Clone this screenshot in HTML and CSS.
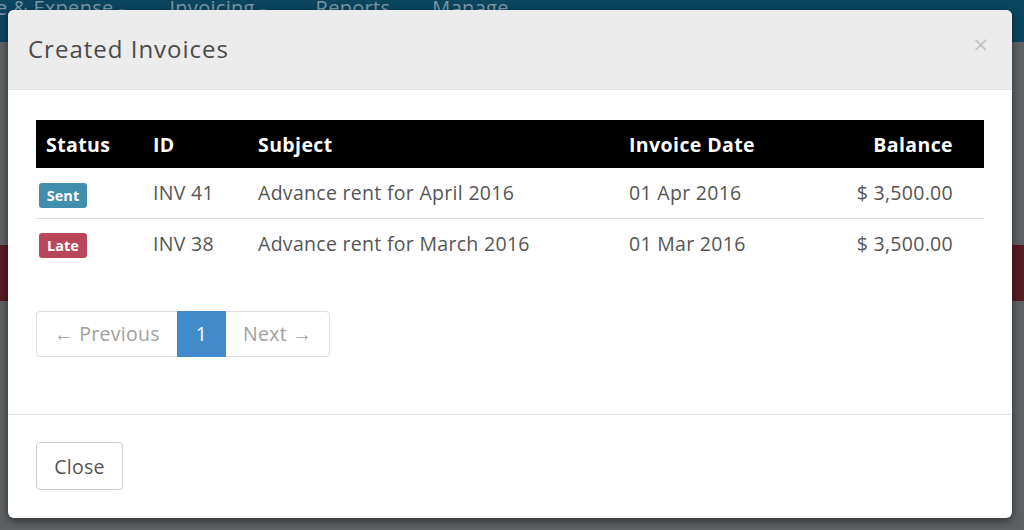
FILE: index.html
```html
<!DOCTYPE html>
<html>
<head>
<meta charset="utf-8">
<link rel="stylesheet" href="styles.css">
</head>
<body>
<div class="page">
  <nav class="topnav">
    <span class="nav-item first">e &amp; Expense <span class="caret">▾</span></span>
    <span class="nav-item second">Invoicing <span class="caret">▾</span></span>
    <span class="nav-item third">Reports</span>
    <span class="nav-item">Manage</span>
  </nav>
  <div class="spacer-a"></div>
  <div class="alert-band"></div>
</div>

<div class="modal">
  <div class="modal-header">
    <h4 class="modal-title">Created Invoices</h4>
    <span class="close">×</span>
  </div>
  <div class="modal-body">
    <table class="invoices">
      <thead>
        <tr>
          <th class="c-status">Status</th>
          <th class="c-id">ID</th>
          <th class="c-subject">Subject</th>
          <th class="c-date">Invoice Date</th>
          <th class="c-balance">Balance</th>
        </tr>
      </thead>
      <tbody>
        <tr>
          <td class="c-status"><span class="label label-sent">Sent</span></td>
          <td class="c-id">INV 41</td>
          <td class="c-subject">Advance rent for April 2016</td>
          <td class="c-date">01 Apr 2016</td>
          <td class="c-balance">$ 3,500.00</td>
        </tr>
        <tr class="sep">
          <td class="c-status"><span class="label label-late">Late</span></td>
          <td class="c-id">INV 38</td>
          <td class="c-subject">Advance rent for March 2016</td>
          <td class="c-date">01 Mar 2016</td>
          <td class="c-balance">$ 3,500.00</td>
        </tr>
      </tbody>
    </table>
    <ul class="pagination">
      <li class="pg prev">← Previous</li>
      <li class="pg active">1</li>
      <li class="pg next">Next →</li>
    </ul>
  </div>
  <div class="modal-footer">
    <button class="btn">Close</button>
  </div>
</div>
</body>
</html>
```

FILE: styles.css
```css
html, body {
  margin: 0;
  padding: 0;
}
body {
  width: 1024px;
  height: 530px;
  overflow: hidden;
  background: #5e6163;
  font-family: "Open Sans", "Noto Sans", sans-serif;
}
.page {
  display: flex;
  flex-direction: column;
}
.topnav {
  height: 42px;
  background: #0b4560;
  display: flex;
  align-items: flex-start;
  color: #7d95a3;
  font-size: 20px;
  line-height: 16px;
  letter-spacing: 0.3px;
  overflow: hidden;
}
.nav-item {
  display: inline-block;
  margin-right: 44px;
  white-space: nowrap;
}
.nav-item.first {
  margin-left: -4px;
}
.nav-item.second {
  margin-right: 49px;
}
.nav-item.third {
  margin-right: 42px;
}
.caret {
  font-size: 11px;
}
.spacer-a {
  height: 203px;
}
.alert-band {
  height: 56px;
  background: #561a23;
}

.modal {
  position: absolute;
  left: 8px;
  top: 10px;
  width: 1004px;
  height: 508px;
  background: #fff;
  border-radius: 6px;
  box-shadow: 0 3px 8px rgba(0,0,0,0.5);
  overflow: hidden;
  display: flex;
  flex-direction: column;
}
.modal-header {
  height: 80px;
  box-sizing: border-box;
  background: #ececec;
  border-bottom: 1px solid #e4e4e4;
  display: flex;
  align-items: center;
  justify-content: space-between;
  padding: 0 24px 0 20px;
}
.modal-title {
  margin: 0;
  font-weight: 400;
  font-size: 24px;
  letter-spacing: 1px;
  color: #4a4a4a;
  padding-bottom: 2px;
}
.close {
  font-size: 26px;
  color: #c4c4c4;
  line-height: 1;
  padding-bottom: 12px;
}
.modal-body {
  padding: 30px 28px 0 28px;
  height: 325px;
  box-sizing: border-box;
  border-bottom: 1px solid #e5e5e5;
}
.invoices {
  width: 948px;
  border-collapse: collapse;
  font-size: 19.5px;
  letter-spacing: 0.3px;
  color: #555;
}
.invoices thead tr {
  background: #000;
  color: #fff;
  height: 48px;
}
.invoices th {
  font-weight: 700;
  text-align: left;
  padding: 0 10px;
  vertical-align: middle;
  letter-spacing: 0.4px;
}
.invoices td {
  height: 50px;
  padding: 0 10px;
  vertical-align: middle;
  box-sizing: border-box;
}
.invoices tr.sep td {
  border-top: 1px solid #dcdcdc;
}
.c-status { width: 87px; }
.invoices td.c-status { padding-left: 3px; padding-top: 2px; }
.c-id { width: 85px; }
.c-subject { width: 351px; }
.c-date { width: 180px; }
.invoices .c-balance {
  text-align: right;
  padding-right: 31px;
}
.label {
  display: inline-block;
  width: 48px;
  height: 25px;
  line-height: 25px;
  text-align: center;
  border-radius: 3px;
  color: #fff;
  font-size: 14.5px;
  letter-spacing: 0;
  font-weight: 700;
}
.label-sent { background: #3f8eae; }
.label-late { background: #b9475a; }

.pagination {
  list-style: none;
  margin: 43px 0 0 0;
  padding: 0;
  display: flex;
  width: max-content;
  border: 1px solid #dedede;
  border-radius: 4px;
  font-size: 19.5px;
  letter-spacing: 0.3px;
}
.pg {
  height: 44px;
  line-height: 44px;
  color: #a0a0a0;
  text-align: center;
}
.pg.prev { width: 140px; }
.pg.active {
  width: 49px;
  background: #428bca;
  color: #fff;
  margin: -1px 0;
  height: 46px;
  line-height: 46px;
}
.pg.next { width: 103px; }

.modal-footer {
  padding: 27px 28px;
}
.btn {
  width: 87px;
  height: 48px;
  background: #fff;
  border: 1px solid #cfcfcf;
  border-radius: 4px;
  font-family: "Open Sans", "Noto Sans", sans-serif;
  font-size: 19.5px;
  letter-spacing: 0.3px;
  color: #555;
  padding: 0;
}
```
